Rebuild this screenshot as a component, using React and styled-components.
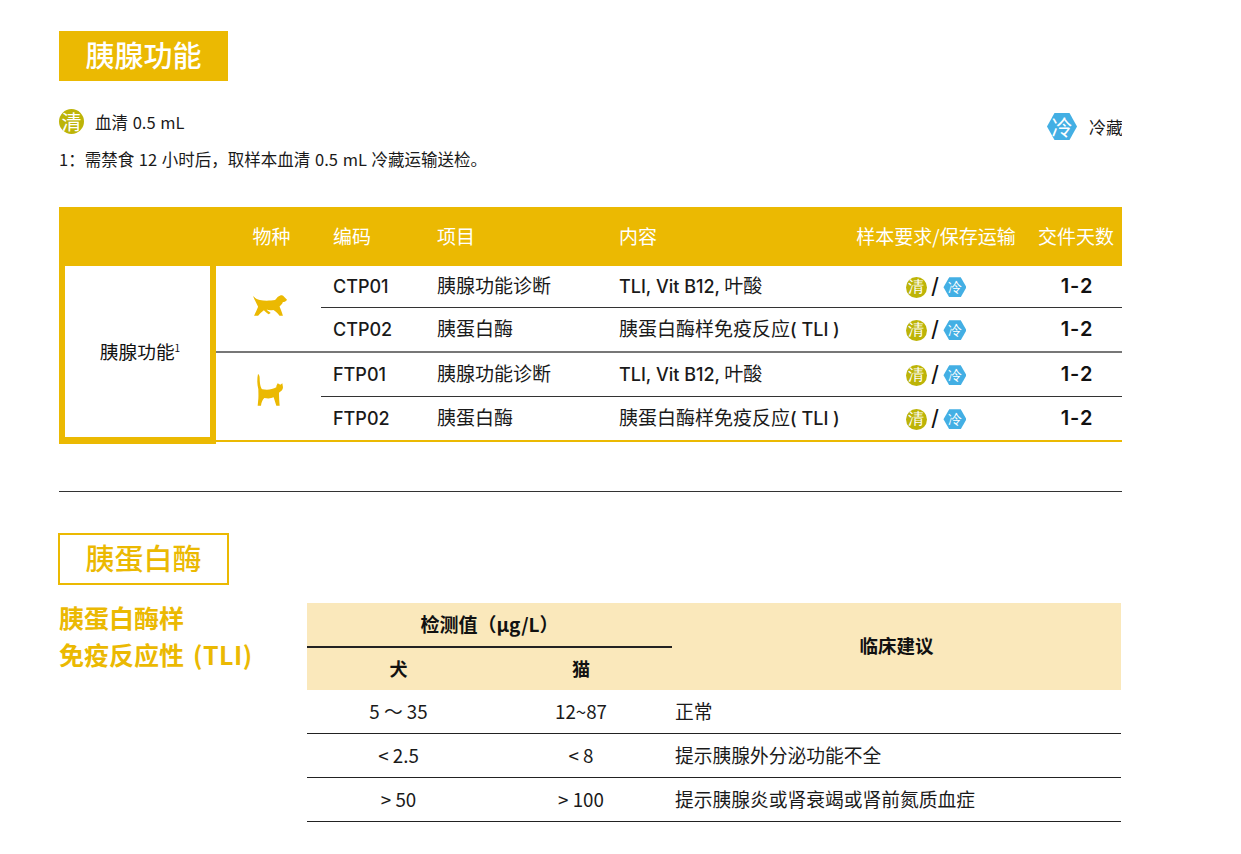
import styled, { createGlobalStyle } from 'styled-components'

const YELLOW = '#ebb902'
const CJK = '"Noto Sans CJK SC", "Noto Sans", sans-serif'
const LATIN = 'Inter, "Noto Sans CJK SC", sans-serif'

const GlobalStyle = createGlobalStyle`
  html, body {
    margin: 0;
    padding: 0;
    background: #fff;
    color: #1a1a1a;
    font-family: ${CJK};
  }
`

const Page = styled.div`
  width: 1063px;
  height: 854px;
  padding: 31px 0 0 59px;
  overflow: hidden;
`

const FilledTitle = styled.h2`
  box-sizing: border-box;
  width: 169px;
  height: 50px;
  margin: 0;
  background: ${YELLOW};
  color: #fff;
  font-size: 29px;
  font-weight: 500;
  line-height: 46px;
  text-align: center;
`

const LegendRow = styled.div`
  display: flex;
  justify-content: space-between;
  align-items: flex-start;
  margin: 28px -1px 0 0;
`

const LegendItem = styled.div`
  display: flex;
  align-items: center;
  gap: ${props => props.$gap}px;
  margin-top: ${props => props.$top || 0}px;
  font-size: ${props => props.$size}px;
  word-spacing: 1px;
`

const Circle = styled.span`
  display: inline-flex;
  align-items: center;
  justify-content: center;
  width: ${props => props.$size}px;
  height: ${props => props.$size}px;
  border-radius: 50%;
  background: #bdb407;
  color: #fff;
  font-size: ${props => props.$size - 5}px;
  line-height: 1;
`

const Hexagon = styled.span`
  display: inline-flex;
  align-items: center;
  justify-content: center;
  width: ${props => props.$w}px;
  height: ${props => props.$h}px;
  background: #43afe4;
  clip-path: polygon(25% 0, 75% 0, 100% 50%, 75% 100%, 25% 100%, 0 50%);
  color: #fff;
  font-size: ${props => props.$h - 6}px;
  line-height: 1;
`

const Note = styled.p`
  margin: 7px 0 0;
  font-size: 16.5px;
  line-height: 24px;
  word-spacing: 1px;
`

const ProductTable = styled.table`
  width: 1063px;
  margin-top: 36px;
  border-collapse: separate;
  border-spacing: 0;
  table-layout: fixed;
`

const HeadCell = styled.th`
  box-sizing: border-box;
  height: 59px;
  padding: 0 0 2px ${props => props.$pad || 0}px;
  background: ${YELLOW};
  color: #fff;
  font-size: 19px;
  font-weight: 400;
  text-align: ${props => props.$align || 'center'};
  white-space: nowrap;
`

const NameCell = styled.td`
  box-sizing: border-box;
  border: 6px solid ${YELLOW};
  border-top: 0;
  border-bottom-width: 5px;
  box-shadow: 0 2px 0 ${YELLOW};
  padding: 0 0 3px 5px;
  font-size: 18.7px;
  color: #111;
  text-align: center;
  vertical-align: middle;

  sup {
    font-size: 10px;
    line-height: 0;
  }
`

const SpeciesCell = styled.td`
  padding: 0 0 ${props => props.$lift}px 3px;
  text-align: center;
  vertical-align: middle;
  border-bottom: ${props => (props.$last ? `2px solid ${YELLOW}` : '2px solid #777')};

  svg {
    display: block;
    margin: 0 auto;
  }
`

const Cell = styled.td`
  box-sizing: border-box;
  height: ${props => props.$h}px;
  padding: 0 0 ${props => props.$bottom ?? 5}px ${props => props.$pad || 0}px;
  border-bottom: ${props => props.$line};
  font-size: 19px;
  text-align: ${props => props.$align || 'center'};
  white-space: nowrap;
`

const Latin = styled.span`
  font-family: ${LATIN};
  font-size: 18px;
  font-weight: 500;
`

const Days = styled.span`
  font-family: ${LATIN};
  font-size: 20px;
  font-weight: 600;
  letter-spacing: 1px;
  color: #111;
`

const Sample = styled.span`
  display: inline-flex;
  align-items: center;
  gap: 5px;
  font-family: "Liberation Sans", sans-serif;
  font-size: 25px;
  line-height: 1;
  vertical-align: middle;
  color: #111;
`

const Divider = styled.hr`
  height: 1px;
  margin: 49px 0 0;
  border: 0;
  background: #333;
`

const OutlineTitle = styled.h2`
  box-sizing: border-box;
  width: 171px;
  height: 52px;
  margin: 41px 0 0 -1px;
  border: 2px solid ${YELLOW};
  color: ${YELLOW};
  font-size: 29px;
  font-weight: 500;
  line-height: 44px;
  text-align: center;
`

const TliSection = styled.section`
  display: flex;
  align-items: flex-start;
  margin-top: 18px;
`

const TliHeading = styled.h3`
  flex: 0 0 248px;
  margin: -4px 0 0;
  color: ${YELLOW};
  font-size: 25px;
  font-weight: 700;
  line-height: 37px;
  white-space: nowrap;

  span {
    margin-left: 9px;
    letter-spacing: 0.5px;
  }
`

const RangeTable = styled.table`
  width: 814px;
  border-collapse: separate;
  border-spacing: 0;
  table-layout: fixed;
`

const RangeHead = styled.th`
  box-sizing: border-box;
  height: ${props => props.$h}px;
  padding: 0 0 ${props => props.$bottom ?? 3}px;
  background: #fae8bb;
  border-bottom: ${props => (props.$rule ? '2px solid #222' : '0')};
  font-size: ${props => props.$size || 18}px;
  font-weight: 700;
  color: #111;
`

const RangeCell = styled.td`
  box-sizing: border-box;
  height: 44px;
  padding: 0 0 2px ${props => props.$pad || 0}px;
  border-bottom: 1px solid #222;
  font-size: 18.75px;
  text-align: ${props => (props.$pad ? 'left' : 'center')};
`

function Dog() {
  return (
    <svg width="34" height="21" viewBox="0 0 100 60" fill={YELLOW}>
      <path d="M0 2 C6 8 12 12 20 14 C34 17 52 16 65 14 C70 8 76 0 85 0 C90 1 94 8 100 13 C98 18 92 20 88 20 C86 26 82 30 78 33 C82 42 85 50 88 60 L78 60 C72 52 66 46 60 43 C52 45 46 44 40 42 C44 47 50 50 52 52 L46 56 C40 52 36 48 32 44 C26 48 20 54 15 60 L3 60 C8 50 12 42 15 34 C10 24 4 12 0 2 Z" />
    </svg>
  )
}

function Cat() {
  return (
    <svg width="26" height="32" viewBox="0 0 78 96" fill={YELLOW}>
      <path d="M3 0 C0 14 0 30 4 46 C4 56 5 64 4 74 L2 95 L12 95 C13 86 16 78 22 72 C32 74 42 74 50 70 L58 95 L68 95 C67 82 66 68 66 56 C72 52 78 48 78 40 L76 28 L70 32 L62 28 L58 36 L58 40 C46 48 28 48 16 46 C10 42 8 24 8 12 C8 6 6 2 3 0 Z" />
    </svg>
  )
}

function SampleIcons() {
  return (
    <Sample>
      <Circle $size={21}>清</Circle>
      /
      <Hexagon $w={23} $h={20}>冷</Hexagon>
    </Sample>
  )
}

const LINE = '1px solid #333'
const MID = '2px solid #777'
const GOLD = `2px solid ${YELLOW}`

const vitamins = <><Latin>TLI, Vit B12,</Latin> 叶酸</>
const immuno = <>胰蛋白酶样免疫反应<Latin>( TLI )</Latin></>

const rows = [
  { code: 'CTP01', item: '胰腺功能诊断', content: vitamins, h: 42, line: LINE, species: <Dog />, lift: 6 },
  { code: 'CTP02', item: '胰蛋白酶', content: immuno, h: 45, line: MID },
  { code: 'FTP01', item: '胰腺功能诊断', content: vitamins, h: 44, line: LINE, species: <Cat />, lift: 14, last: true },
  { code: 'FTP02', item: '胰蛋白酶', content: immuno, h: 45, line: GOLD },
]

const ranges = [
  ['5 ～ 35', '12~87', '正常'],
  ['< 2.5', '< 8', '提示胰腺外分泌功能不全'],
  ['> 50', '> 100', '提示胰腺炎或肾衰竭或肾前氮质血症'],
]

export default function App() {
  return (
    <Page>
      <GlobalStyle />
      <FilledTitle>胰腺功能</FilledTitle>

      <LegendRow>
        <LegendItem $gap={11} $size={16.5}>
          <Circle $size={25}>清</Circle>
          血清 0.5 mL
        </LegendItem>
        <LegendItem $gap={12} $top={4} $size={17}>
          <Hexagon $w={30} $h={27}>冷</Hexagon>
          冷藏
        </LegendItem>
      </LegendRow>
      <Note>1：需禁食 12 小时后，取样本血清 0.5 mL 冷藏运输送检。</Note>

      <ProductTable>
        <colgroup>
          <col style={{ width: 157 }} />
          <col style={{ width: 105 }} />
          <col style={{ width: 106 }} />
          <col style={{ width: 182 }} />
          <col style={{ width: 241 }} />
          <col style={{ width: 172 }} />
          <col style={{ width: 100 }} />
        </colgroup>
        <thead>
          <tr>
            <HeadCell />
            <HeadCell $pad={6}>物种</HeadCell>
            <HeadCell $align="left" $pad={12}>编码</HeadCell>
            <HeadCell $align="left" $pad={10}>项目</HeadCell>
            <HeadCell $align="left" $pad={10}>内容</HeadCell>
            <HeadCell>样本要求/保存运输</HeadCell>
            <HeadCell $pad={8}>交件天数</HeadCell>
          </tr>
        </thead>
        <tbody>
          {rows.map((row, i) => (
            <tr key={row.code}>
              {i === 0 && (
                <NameCell rowSpan={4}>
                  胰腺功能<sup>1</sup>
                </NameCell>
              )}
              {row.species && (
                <SpeciesCell rowSpan={2} $lift={row.lift} $last={row.last}>
                  {row.species}
                </SpeciesCell>
              )}
              <Cell $h={row.h} $line={row.line} $align="left" $pad={12}><Latin>{row.code}</Latin></Cell>
              <Cell $h={row.h} $line={row.line} $align="left" $pad={10}>{row.item}</Cell>
              <Cell $h={row.h} $line={row.line} $align="left" $pad={10}>{row.content}</Cell>
              <Cell $h={row.h} $line={row.line} $bottom={3}><SampleIcons /></Cell>
              <Cell $h={row.h} $line={row.line} $pad={10}><Days>1-2</Days></Cell>
            </tr>
          ))}
        </tbody>
      </ProductTable>

      <Divider />
      <OutlineTitle>胰蛋白酶</OutlineTitle>

      <TliSection>
        <TliHeading>
          胰蛋白酶样
          <br />
          免疫反应性<span>(TLI)</span>
        </TliHeading>
        <RangeTable>
          <colgroup>
            <col style={{ width: 183 }} />
            <col style={{ width: 182 }} />
            <col style={{ width: 449 }} />
          </colgroup>
          <thead>
            <tr>
              <RangeHead colSpan={2} $h={45} $size={19} $rule>检测值（μg/L）</RangeHead>
              <RangeHead rowSpan={2} $size={18.5}>临床建议</RangeHead>
            </tr>
            <tr>
              <RangeHead $h={42}>犬</RangeHead>
              <RangeHead $h={42}>猫</RangeHead>
            </tr>
          </thead>
          <tbody>
            {ranges.map(([dog, cat, advice]) => (
              <tr key={advice}>
                <RangeCell>{dog}</RangeCell>
                <RangeCell>{cat}</RangeCell>
                <RangeCell $pad={3}>{advice}</RangeCell>
              </tr>
            ))}
          </tbody>
        </RangeTable>
      </TliSection>
    </Page>
  )
}
